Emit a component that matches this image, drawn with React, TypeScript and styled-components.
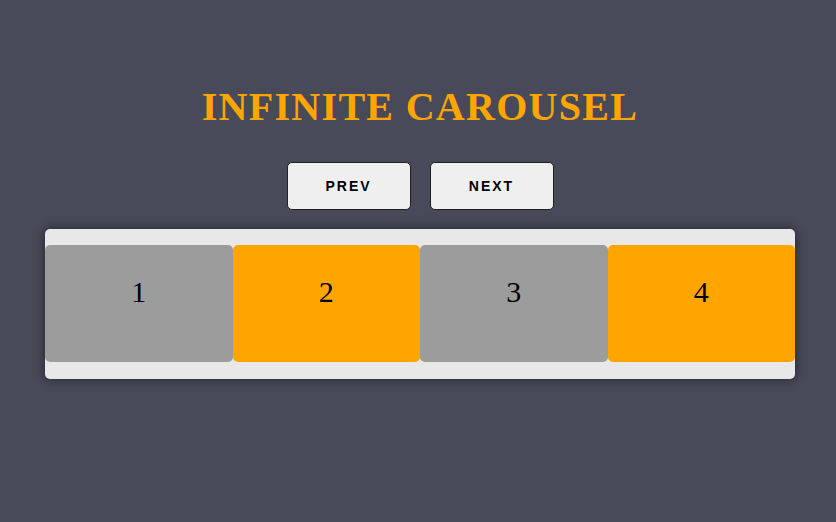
import React, { useState } from "react";
import styled, { createGlobalStyle } from "styled-components";

const GlobalStyle = createGlobalStyle`
  html, body {
    margin: 0;
    padding: 0;
    background: #484a59;
  }
  body {
    font-family: "Liberation Serif", "Times New Roman", serif;
  }
`;

const slides = [1, 2, 3, 4];

const App: React.FC = () => {
  const [offset, setOffset] = useState<number>(0);

  const ordered = slides.map((_, i) => slides[(i + offset) % slides.length]);

  return (
    <Page>
      <GlobalStyle />
      <Title>INFINITE CAROUSEL</Title>
      <Controls>
        <NavButton onClick={() => setOffset((offset + slides.length - 1) % slides.length)}>
          PREV
        </NavButton>
        <NavButton onClick={() => setOffset((offset + 1) % slides.length)}>NEXT</NavButton>
      </Controls>
      <Track>
        {ordered.map((n) => (
          <Slide key={n} $odd={n % 2 === 1}>
            {n}
          </Slide>
        ))}
      </Track>
    </Page>
  );
};

export default App;

const Page = styled.div`
  display: flex;
  flex-direction: column;
  align-items: center;
  min-height: 522px;
  padding: 84px 0 0 4px;
  box-sizing: border-box;
`;

const Title = styled.h1`
  margin: 0;
  font-family: "Liberation Serif", "Times New Roman", serif;
  font-size: 40px;
  font-weight: 700;
  line-height: 46px;
  color: #ffa500;
  letter-spacing: 1.3px;
`;

const Controls = styled.div`
  display: flex;
  gap: 19px;
  margin-top: 32px;
`;

const NavButton = styled.button`
  width: 124px;
  height: 48px;
  background: #efefef;
  border: 1px solid #1f1f1f;
  border-radius: 5px;
  font-family: "Liberation Sans", Arial, sans-serif;
  font-size: 14px;
  font-weight: 700;
  letter-spacing: 2px;
  color: #000;
  cursor: pointer;
`;

const Track = styled.div`
  display: flex;
  width: 750px;
  margin-top: 19px;
  padding: 16px 0 17px;
  background: #e8e8e8;
  border-radius: 5px;
  box-shadow: 0 0 12px rgba(0, 0, 0, 0.55);
`;

const Slide = styled.div<{ $odd: boolean }>`
  flex: 1;
  height: 117px;
  box-sizing: border-box;
  padding-top: 30px;
  text-align: center;
  background: ${(p) => (p.$odd ? "#9c9c9c" : "#ffa500")};
  border-radius: 5px;
  font-family: "Liberation Serif", "Times New Roman", serif;
  font-size: 30px;
  line-height: 34px;
  color: #000;
`;
